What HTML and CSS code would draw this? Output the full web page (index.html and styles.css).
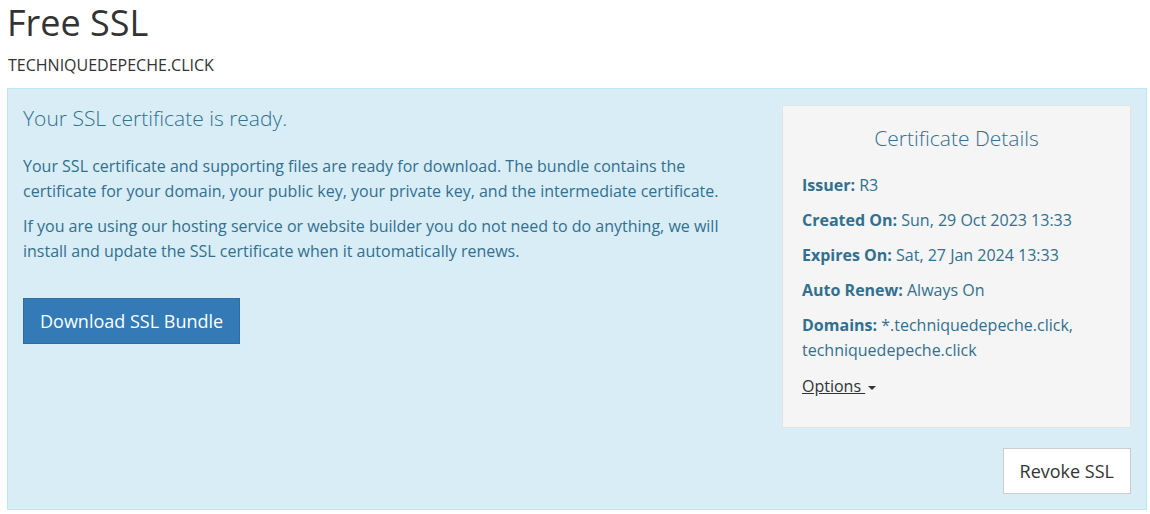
FILE: index.html
```html
<!DOCTYPE html>
<html>
<head>
<meta charset="utf-8">
<link rel="stylesheet" href="styles.css">
</head>
<body>
<div class="page">
  <h1 class="page-title">Free SSL</h1>
  <div class="domain">TECHNIQUEDEPECHE.CLICK</div>
  <div class="alert">
    <div class="main">
      <h3 class="ready">Your SSL certificate is ready.</h3>
      <p>Your SSL certificate and supporting files are ready for download. The bundle contains the certificate for your domain, your public key, your private key, and the intermediate certificate.</p>
      <p>If you are using our hosting service or website builder you do not need to do anything, we will install and update the SSL certificate when it automatically renews.</p>
      <button class="btn btn-primary">Download SSL Bundle</button>
    </div>
    <div class="side">
      <div class="well">
        <h3 class="well-title">Certificate Details</h3>
        <p><b>Issuer:</b> R3</p>
        <p><b>Created On:</b> Sun, 29 Oct 2023 13:33</p>
        <p><b>Expires On:</b> Sat, 27 Jan 2024 13:33</p>
        <p><b>Auto Renew:</b> Always On</p>
        <p><b>Domains:</b> *.techniquedepeche.click, techniquedepeche.click</p>
        <p class="last"><a class="options" href="#">Options&nbsp;</a><span class="caret"></span></p>
      </div>
      <div class="actions">
        <button class="btn btn-default">Revoke SSL</button>
      </div>
    </div>
  </div>
</div>
</body>
</html>
```
FILE: styles.css
```css
* { box-sizing: border-box; }
html, body { margin: 0; padding: 0; background: #fff; }
body {
  font-family: "Open Sans", "Liberation Sans", sans-serif;
  font-size: 16px;
  line-height: 25px;
  color: #333;
}
.page { margin-left: 7px; width: 1140px; }
.page-title {
  margin: 0;
  font-size: 36px;
  font-weight: 400;
  line-height: 46px;
}
.domain {
  font-size: 16px;
  line-height: 22px;
  margin-top: 8px;
  margin-left: 1px;
  text-transform: uppercase;
}
.alert {
  margin-top: 12px;
  background: #d9edf7;
  border: 1px solid #bce8f1;
  color: #31708f;
  padding: 15px;
  display: grid;
  grid-template-columns: 1fr 349px;
  column-gap: 30px;
}
.ready, .well-title {
  margin: 0;
  font-size: 21px;
  font-weight: 300;
  line-height: 28px;
}
.main p { margin: 22px 0 0; }
.main p + p { margin-top: 10px; }
.btn {
  font-family: inherit;
  font-size: 18px;
  line-height: 24px;
  padding: 10px 16px;
  border-radius: 0;
  cursor: pointer;
}
.btn-primary {
  margin-top: 34px;
  background: #337ab7;
  border: 1px solid #2e6da4;
  color: #fff;
}
.btn-default {
  background: #fff;
  border: 1px solid #ccc;
  color: #333;
}
.well {
  background: #f5f5f5;
  border: 1px solid #e3e3e3;
  padding: 18px 19px 28px;
  margin-top: 1px;
}
.well-title { text-align: center; }
.well p { margin: 10px 0 0; }
.well-title + p { margin-top: 21px; }
.well p.last { margin-top: 11px; }
.well b { font-weight: 700; }
.options { color: #333; text-decoration: underline; }
.caret {
  display: inline-block;
  width: 0; height: 0;
  border-top: 4px solid #333;
  border-left: 4px solid transparent;
  border-right: 4px solid transparent;
  vertical-align: middle;
  margin-left: 3px;
}
.actions { display: flex; justify-content: flex-end; margin-top: 20px; }
```
